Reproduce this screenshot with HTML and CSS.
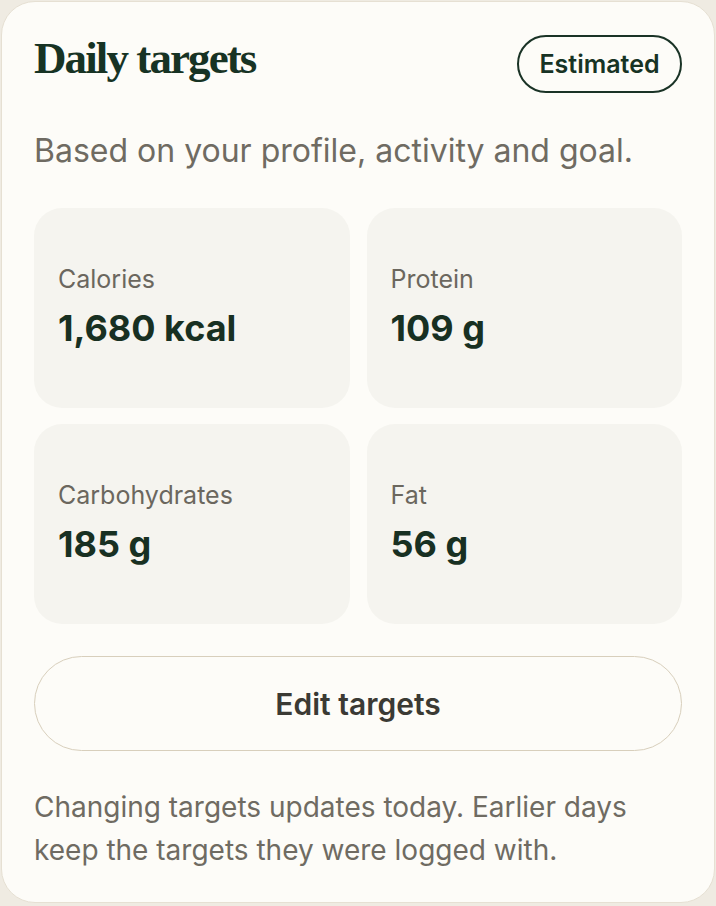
FILE: index.html
```html
<!DOCTYPE html>
<html lang="en">
<head>
<meta charset="utf-8">
<title>Daily targets</title>
<link rel="stylesheet" href="styles.css">
</head>
<body>
<section class="card">
  <header class="card-head">
    <h1 class="title">Daily targets</h1>
    <span class="badge">Estimated</span>
  </header>
  <p class="subtitle">Based on your profile, activity and goal.</p>
  <div class="grid">
    <div class="tile">
      <div class="tile-label">Calories</div>
      <div class="tile-value">1,680 kcal</div>
    </div>
    <div class="tile">
      <div class="tile-label">Protein</div>
      <div class="tile-value">109 g</div>
    </div>
    <div class="tile">
      <div class="tile-label">Carbohydrates</div>
      <div class="tile-value">185 g</div>
    </div>
    <div class="tile">
      <div class="tile-label">Fat</div>
      <div class="tile-value">56 g</div>
    </div>
  </div>
  <button class="edit-btn" type="button">Edit targets</button>
  <p class="note">Changing targets updates today. Earlier days keep the targets they were logged with.</p>
</section>
</body>
</html>
```
FILE: styles.css
```css
html, body {
  margin: 0;
  background: #efebe2;
}
body {
  padding: 1px;
  font-family: Inter, "Noto Sans", sans-serif;
}
.card {
  box-sizing: border-box;
  width: 714px;
  height: 902px;
  background: #fdfcf8;
  border: 1px solid #e6e0d3;
  border-radius: 34px;
  padding: 32px 32px 0 32px;
  display: flex;
  flex-direction: column;
}
.card-head {
  display: flex;
  justify-content: space-between;
  align-items: flex-start;
  height: 60px;
}
.title {
  margin: 2px 0 0 0;
  font-family: "Liberation Serif", serif;
  font-weight: 700;
  font-size: 45px;
  letter-spacing: -1.9px;
  color: #173324;
  line-height: 1;
}
.badge {
  box-sizing: border-box;
  margin-top: 1px;
  height: 58px;
  width: 165px;
  display: flex;
  align-items: center;
  justify-content: center;
  border: 2px solid #1a3326;
  border-radius: 999px;
  font-size: 25px;
  font-weight: 600;
  color: #173324;
}
.subtitle {
  margin: 33px 0 0 0;
  font-size: 32px;
  line-height: 48px;
  color: #6f6b62;
}
.grid {
  margin-top: 33px;
  display: grid;
  grid-template-columns: 1fr 1fr;
  gap: 16px 17px;
}
.tile {
  height: 200px;
  box-sizing: border-box;
  background: #f5f4ef;
  border-radius: 28px;
  padding: 56px 24px 0 24px;
}
.tile-label {
  font-size: 25px;
  line-height: 30px;
  color: #6b675e;
}
.tile-value {
  margin-top: 12px;
  font-size: 36px;
  font-weight: 700;
  line-height: 44px;
  color: #183022;
}
.edit-btn {
  margin-top: 32px;
  height: 95px;
  width: 100%;
  border: 1.5px solid #d8cfbc;
  border-radius: 999px;
  background: transparent;
  font-family: Inter, "Noto Sans", sans-serif;
  font-size: 30px;
  font-weight: 600;
  color: #3b3a34;
}
.note {
  margin: 35px 0 0 0;
  font-size: 28px;
  line-height: 43px;
  color: #6f6b62;
}
```
